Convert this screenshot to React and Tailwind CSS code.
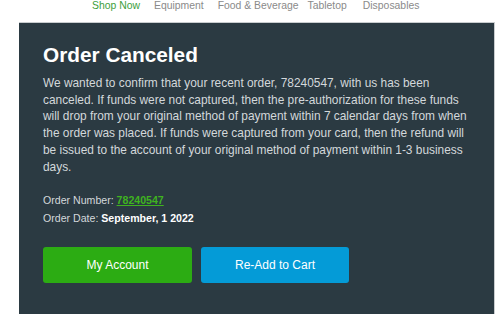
export default function App() {
  return (
    <div className="w-[500px] h-[329px] bg-white overflow-hidden relative" style={{ fontFamily: '"Liberation Sans", Arial, sans-serif' }}>
      <div className="flex h-[22px] items-start text-[10.4px] leading-[11px] text-[#8a8a8a] pt-0">
        <span className="ml-[92px] text-[#3c9e3c]">Shop Now</span>
        <span className="ml-[14px]">Equipment</span>
        <span className="ml-[14px]">Food &amp; Beverage</span>
        <span className="ml-[9px]">Tabletop</span>
        <span className="ml-[16px]">Disposables</span>
      </div>
      <div className="ml-[19px] w-[476px] h-[292px] bg-[#2b3a42] border-t-[1.5px] border-r border-[#c9cdcf] pl-[24px] pr-[20px] pt-[20px]">
        <h1 className="text-[20.8px] leading-[24px] font-bold text-white">Order Canceled</h1>
        <p className="mt-[8px] text-[11.9px] leading-[16.7px] text-[#d3d8db]">
          We wanted to confirm that your recent order, 78240547, with us has been canceled. If funds were not captured, then the pre-authorization for these funds will drop from your original method of payment within 7 calendar days from when the order was placed. If funds were captured from your card, then the refund will be issued to the account of your original method of payment within 1-3 business days.
        </p>
        <div className="mt-[16px] text-[10.6px] leading-[18px] text-[#d3d8db]">
          <div>
            Order Number: <a className="text-[#3fb31f] underline font-bold">78240547</a>
          </div>
          <div>
            Order Date: <span className="font-bold text-white">September, 1 2022</span>
          </div>
        </div>
        <div className="mt-[20px] flex gap-[9px]">
          <button className="w-[149px] h-[36px] rounded-[3px] bg-[#2cac13] text-white text-[12px]">My Account</button>
          <button className="w-[148px] h-[36px] rounded-[3px] bg-[#049bd7] text-white text-[12px]">Re-Add to Cart</button>
        </div>
      </div>
    </div>
  );
}
